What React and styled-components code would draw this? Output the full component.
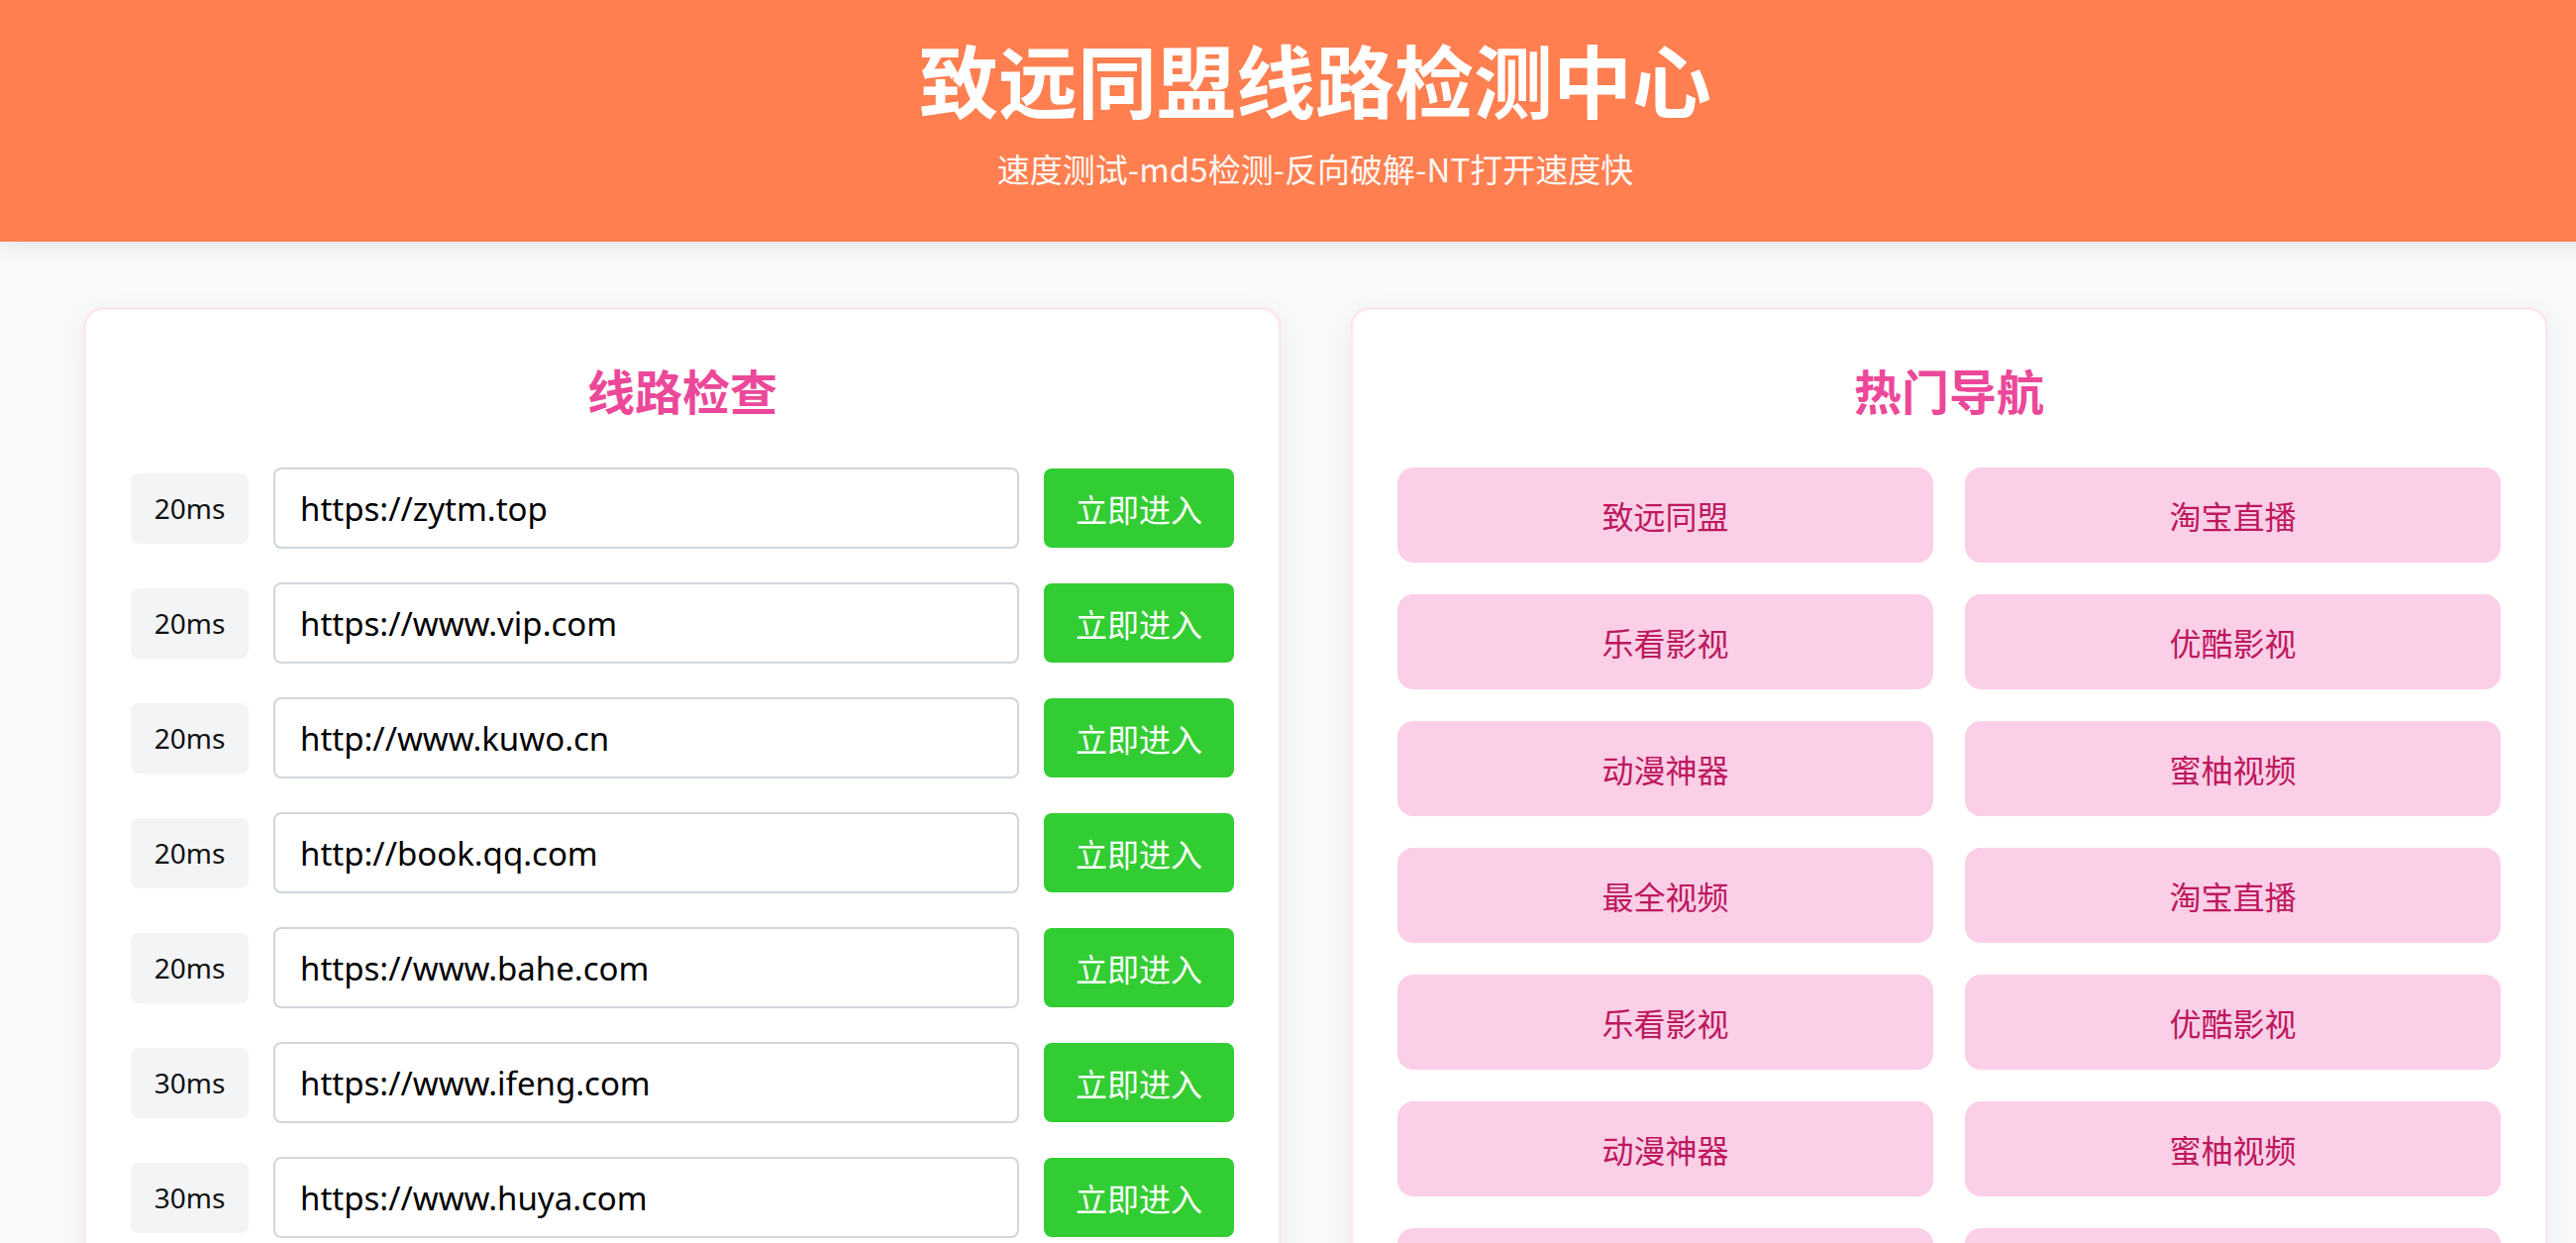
import styled, { createGlobalStyle } from "styled-components";

const GlobalStyle = createGlobalStyle`
  * {
    box-sizing: border-box;
  }
  html, body {
    overflow: hidden;
  }
  body {
    margin: 0;
    background-color: #f8f9fb;
    font-family: "Noto Sans", "Noto Sans CJK SC", sans-serif;
  }
`;

const Page = styled.div`
  width: 2656px;
`;

const Header = styled.header`
  background-color: #ff7f50;
  height: 244px;
  display: flex;
  flex-direction: column;
  align-items: center;
  padding-top: 21px;
  box-shadow: 0 6px 20px rgba(0, 0, 0, 0.08);
  color: #fff;
`;

const Title = styled.h1`
  margin: 0;
  font-size: 80px;
  line-height: 114px;
  font-weight: 700;
  font-family: "Noto Sans CJK SC", sans-serif;
`;

const Subtitle = styled.p`
  margin: 13px 0 0;
  font-size: 33px;
  line-height: 44px;
  font-family: "Noto Sans CJK SC", sans-serif;
  opacity: 0.95;
`;

const Main = styled.main`
  display: grid;
  grid-template-columns: 1210px 1210px;
  gap: 69px;
  padding: 66px 84px 40px;
`;

const Card = styled.section`
  background-color: #fff;
  border: 3px solid #fce7f3;
  border-radius: 20px;
  box-shadow: 0 8px 30px rgba(0, 0, 0, 0.06);
  padding: 50px 45px;
`;

const CardTitle = styled.h2`
  margin: 0 0 49px;
  text-align: center;
  font-size: 48px;
  line-height: 60px;
  font-weight: 700;
  color: #ec4899;
  font-family: "Noto Sans CJK SC", sans-serif;
`;

const LineList = styled.div`
  display: flex;
  flex-direction: column;
  gap: 34px;
`;

const LineRow = styled.div`
  display: flex;
  align-items: center;
  gap: 25px;
`;

const Speed = styled.span`
  width: 119px;
  height: 71px;
  flex-shrink: 0;
  display: flex;
  align-items: center;
  justify-content: center;
  background-color: #f3f4f6;
  border-radius: 8px;
  font-size: 28px;
  color: #111;
`;

const UrlInput = styled.input`
  flex: 1;
  min-width: 0;
  height: 82px;
  padding: 0 25px;
  border: 2px solid #d1d5db;
  border-radius: 8px;
  font-family: "Noto Sans", "Noto Sans CJK SC", sans-serif;
  font-size: 33px;
  color: #000;
  outline: none;
  background: #fff;
`;

const EnterButton = styled.button`
  width: 192px;
  height: 80px;
  flex-shrink: 0;
  border: none;
  border-radius: 8px;
  background-color: #32cd32;
  color: #fff;
  font-family: "Noto Sans CJK SC", sans-serif;
  font-size: 32px;
  cursor: pointer;
`;

const NavGrid = styled.div`
  display: grid;
  grid-template-columns: 1fr 1fr;
  gap: 32px;
`;

const NavItem = styled.a`
  height: 96px;
  display: flex;
  align-items: center;
  justify-content: center;
  background-color: #fbcfe8;
  border-radius: 16px;
  color: #be185d;
  font-size: 32px;
  font-family: "Noto Sans CJK SC", sans-serif;
  text-decoration: none;
`;

const lines = [
  { ms: "20ms", url: "https://zytm.top" },
  { ms: "20ms", url: "https://www.vip.com" },
  { ms: "20ms", url: "http://www.kuwo.cn" },
  { ms: "20ms", url: "http://book.qq.com" },
  { ms: "20ms", url: "https://www.bahe.com" },
  { ms: "30ms", url: "https://www.ifeng.com" },
  { ms: "30ms", url: "https://www.huya.com" },
  { ms: "30ms", url: "https://www.douyu.com" },
];

const navs = [
  "致远同盟", "淘宝直播",
  "乐看影视", "优酷影视",
  "动漫神器", "蜜柚视频",
  "最全视频", "淘宝直播",
  "乐看影视", "优酷影视",
  "动漫神器", "蜜柚视频",
  "最全视频", "淘宝直播",
];

const App = () => {
  return (
    <Page>
      <GlobalStyle />
      <Header>
        <Title>致远同盟线路检测中心</Title>
        <Subtitle>速度测试-md5检测-反向破解-NT打开速度快</Subtitle>
      </Header>
      <Main>
        <Card>
          <CardTitle>线路检查</CardTitle>
          <LineList>
            {lines.map((line, i) => (
              <LineRow key={i}>
                <Speed>{line.ms}</Speed>
                <UrlInput defaultValue={line.url} readOnly />
                <EnterButton>立即进入</EnterButton>
              </LineRow>
            ))}
          </LineList>
        </Card>
        <Card>
          <CardTitle>热门导航</CardTitle>
          <NavGrid>
            {navs.map((name, i) => (
              <NavItem key={i} href="#">
                {name}
              </NavItem>
            ))}
          </NavGrid>
        </Card>
      </Main>
    </Page>
  );
};

export default App;
